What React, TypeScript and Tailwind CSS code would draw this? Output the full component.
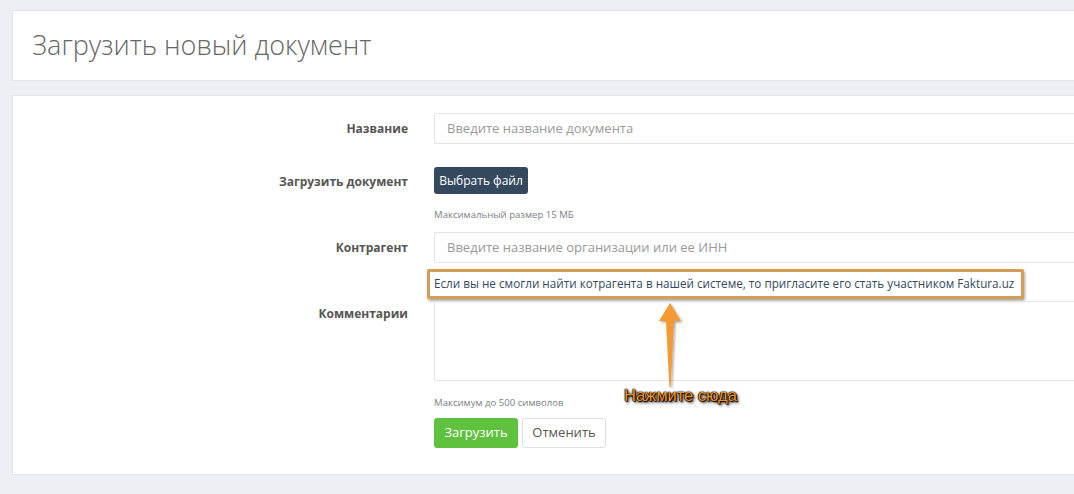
import React from "react";

const font = { fontFamily: '"Open Sans", "Liberation Sans", sans-serif' };

function Label({ children, pad }: { children: React.ReactNode; pad?: string }) {
  return (
    <div
      className={`w-[395px] shrink-0 text-right text-[12px] font-bold text-[#555] ${
        pad ? pad : "flex items-center justify-end"
      }`}
    >
      {children}
    </div>
  );
}

export default function App() {
  return (
    <div className="relative min-h-screen w-full overflow-hidden bg-[#ecf0f4] pt-[10px] pl-[12px]" style={font}>
      <div className="w-[1100px]">
        {/* header */}
        <div className="flex h-[71px] items-center border border-[#e1e5ea] bg-white pl-[19px]">
          <h1 className="text-[27px] font-light text-[#666]">Загрузить новый документ</h1>
        </div>

        {/* form */}
        <div className="mt-[14px] border border-[#e1e5ea] bg-white pt-[17px] pb-[26px]">
          <div className="flex h-[31px] gap-[26px]">
            <Label>Название</Label>
            <div className="flex flex-1 items-center rounded-[2px] border border-[#e1e5ea] pl-[12px] text-[13px] text-[#999]">
              Введите название документа
            </div>
          </div>

          <div className="mt-[23px] flex gap-[26px]">
            <Label pad="pt-[6px]">Загрузить документ</Label>
            <div className="flex flex-col">
              <button className="flex h-[27px] w-[94px] items-center justify-center rounded-[3px] bg-[#34495e] text-[12px] font-medium text-white">
                Выбрать файл
              </button>
              <div className="mt-[14px] text-[9.6px] leading-[14px] text-[#7a7f84]">Максимальный размер 15 МБ</div>
            </div>
          </div>

          <div className="mt-[10px] flex h-[31px] gap-[26px]">
            <Label>Контрагент</Label>
            <div className="flex flex-1 items-center rounded-[2px] border border-[#e1e5ea] pl-[12px] text-[13px] text-[#999]">
              Введите название организации или ее ИНН
            </div>
          </div>

          <div className="mt-[6px] flex gap-[26px]">
            <div className="w-[395px] shrink-0" />
            <div className="-ml-[7px] flex h-[30px] w-[597px] items-center rounded-[2px] border-[3px] border-[#d59d55] bg-white pl-[4px] text-[11.7px] text-[#34495e] shadow-[1px_2px_3px_rgba(0,0,0,0.35)]">
              Если вы не смогли найти котрагента в нашей системе, то пригласите его стать участником Faktura.uz
            </div>
          </div>

          <div className="mt-[2px] flex gap-[26px]">
            <Label pad="pt-[4px]">Комментарии</Label>
            <div className="flex flex-1 flex-col">
              <div className="h-[80px] rounded-[2px] border border-[#e1e5ea]" />
              <div className="mt-[15px] text-[9.6px] leading-[14px] text-[#7a7f84]">Максимум до 500 символов</div>
              <div className="mt-[8px] flex gap-[4px]">
                <button className="flex h-[30px] w-[84px] items-center justify-center rounded-[3px] bg-[#5fc23f] text-[13px] text-white">
                  Загрузить
                </button>
                <button className="flex h-[30px] w-[84px] items-center justify-center rounded-[3px] border border-[#dcdfe3] bg-white text-[13px] text-[#555]">
                  Отменить
                </button>
              </div>
            </div>
          </div>
        </div>
      </div>

      {/* annotation arrow */}
      <svg className="absolute left-[650px] top-[298px]" width="44" height="96" viewBox="0 0 44 96">
        <defs>
          <filter id="sh" x="-50%" y="-20%" width="200%" height="140%">
            <feDropShadow dx="1.5" dy="1.5" stdDeviation="1.2" floodColor="#000" floodOpacity="0.35" />
          </filter>
        </defs>
        <path d="M20 5 L31 23 L24 23 L20.6 89 L19.4 89 L16 23 L9 23 Z" fill="#f39a33" filter="url(#sh)" />
      </svg>
      <div
        className="absolute left-[624px] top-[383px] text-[16.5px] text-[#f7941d] [text-shadow:0_0_1px_#000,0_0_1px_#000,0_0_2px_#000,1px_1px_1px_#000,2px_2px_3px_#000]"
        style={{ fontFamily: '"Liberation Sans", Arial, sans-serif' }}
      >
        Нажмите сюда
      </div>
    </div>
  );
}
